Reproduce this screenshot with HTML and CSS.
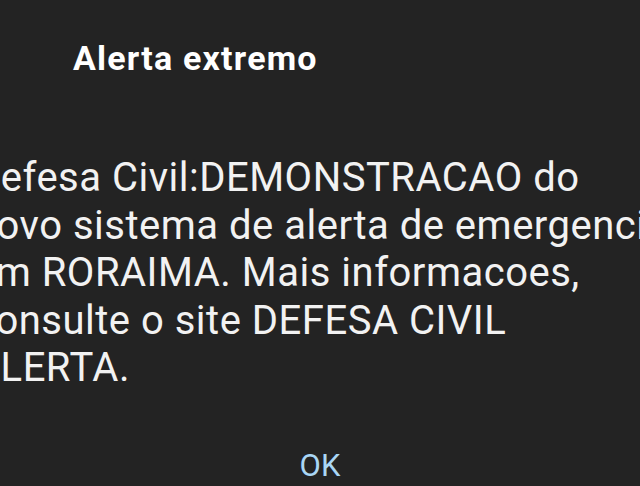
FILE: index.html
```html
<!DOCTYPE html>
<html lang="pt">
<head>
    <meta charset="UTF-8">
    <meta name="viewport" content="width=device-width, initial-scale=1.0">
    <title>Alerta extremo</title>
    <link rel="stylesheet" href="styles.css">
</head>
<body>
    <div class="dialog">
        <h2 class="dialog-title">Alerta extremo</h2>

        <p class="dialog-message">
            Defesa Civil:DEMONSTRACAO do<br>
            novo sistema de alerta de emergencia<br>
            em RORAIMA. Mais informacoes,<br>
            consulte o site DEFESA CIVIL<br>
            ALERTA.
        </p>

        <div class="dialog-actions">
            <button class="btn-ok">OK</button>
        </div>
    </div>
</body>
</html>
```

FILE: styles.css
```css
body {
    margin: 0;
    padding: 0;
    background-color: #232323;
    font-family: Roboto, "Noto Sans", Arial, sans-serif;
    overflow: hidden;
    height: 486px;
}

.dialog {
    display: flex;
    flex-direction: column;
    padding-top: 38px;
    color: #f2f2f2;
}

.dialog-title {
    margin: 0 0 0 73px;
    font-size: 34px;
    line-height: 40px;
    font-weight: 700;
    letter-spacing: 1.2px;
    color: #ffffff;
}

.dialog-message {
    margin: 76px 0 0 -26px;
    font-size: 40px;
    line-height: 47.5px;
    letter-spacing: 0.5px;
    white-space: nowrap;
    color: #f2f2f2;
}

.dialog-actions {
    display: flex;
    justify-content: center;
    margin-top: 56px;
}

.btn-ok {
    background: none;
    border: none;
    padding: 0;
    font-family: inherit;
    font-size: 31px;
    line-height: 36px;
    color: #a9d6f5;
    cursor: pointer;
}
```
